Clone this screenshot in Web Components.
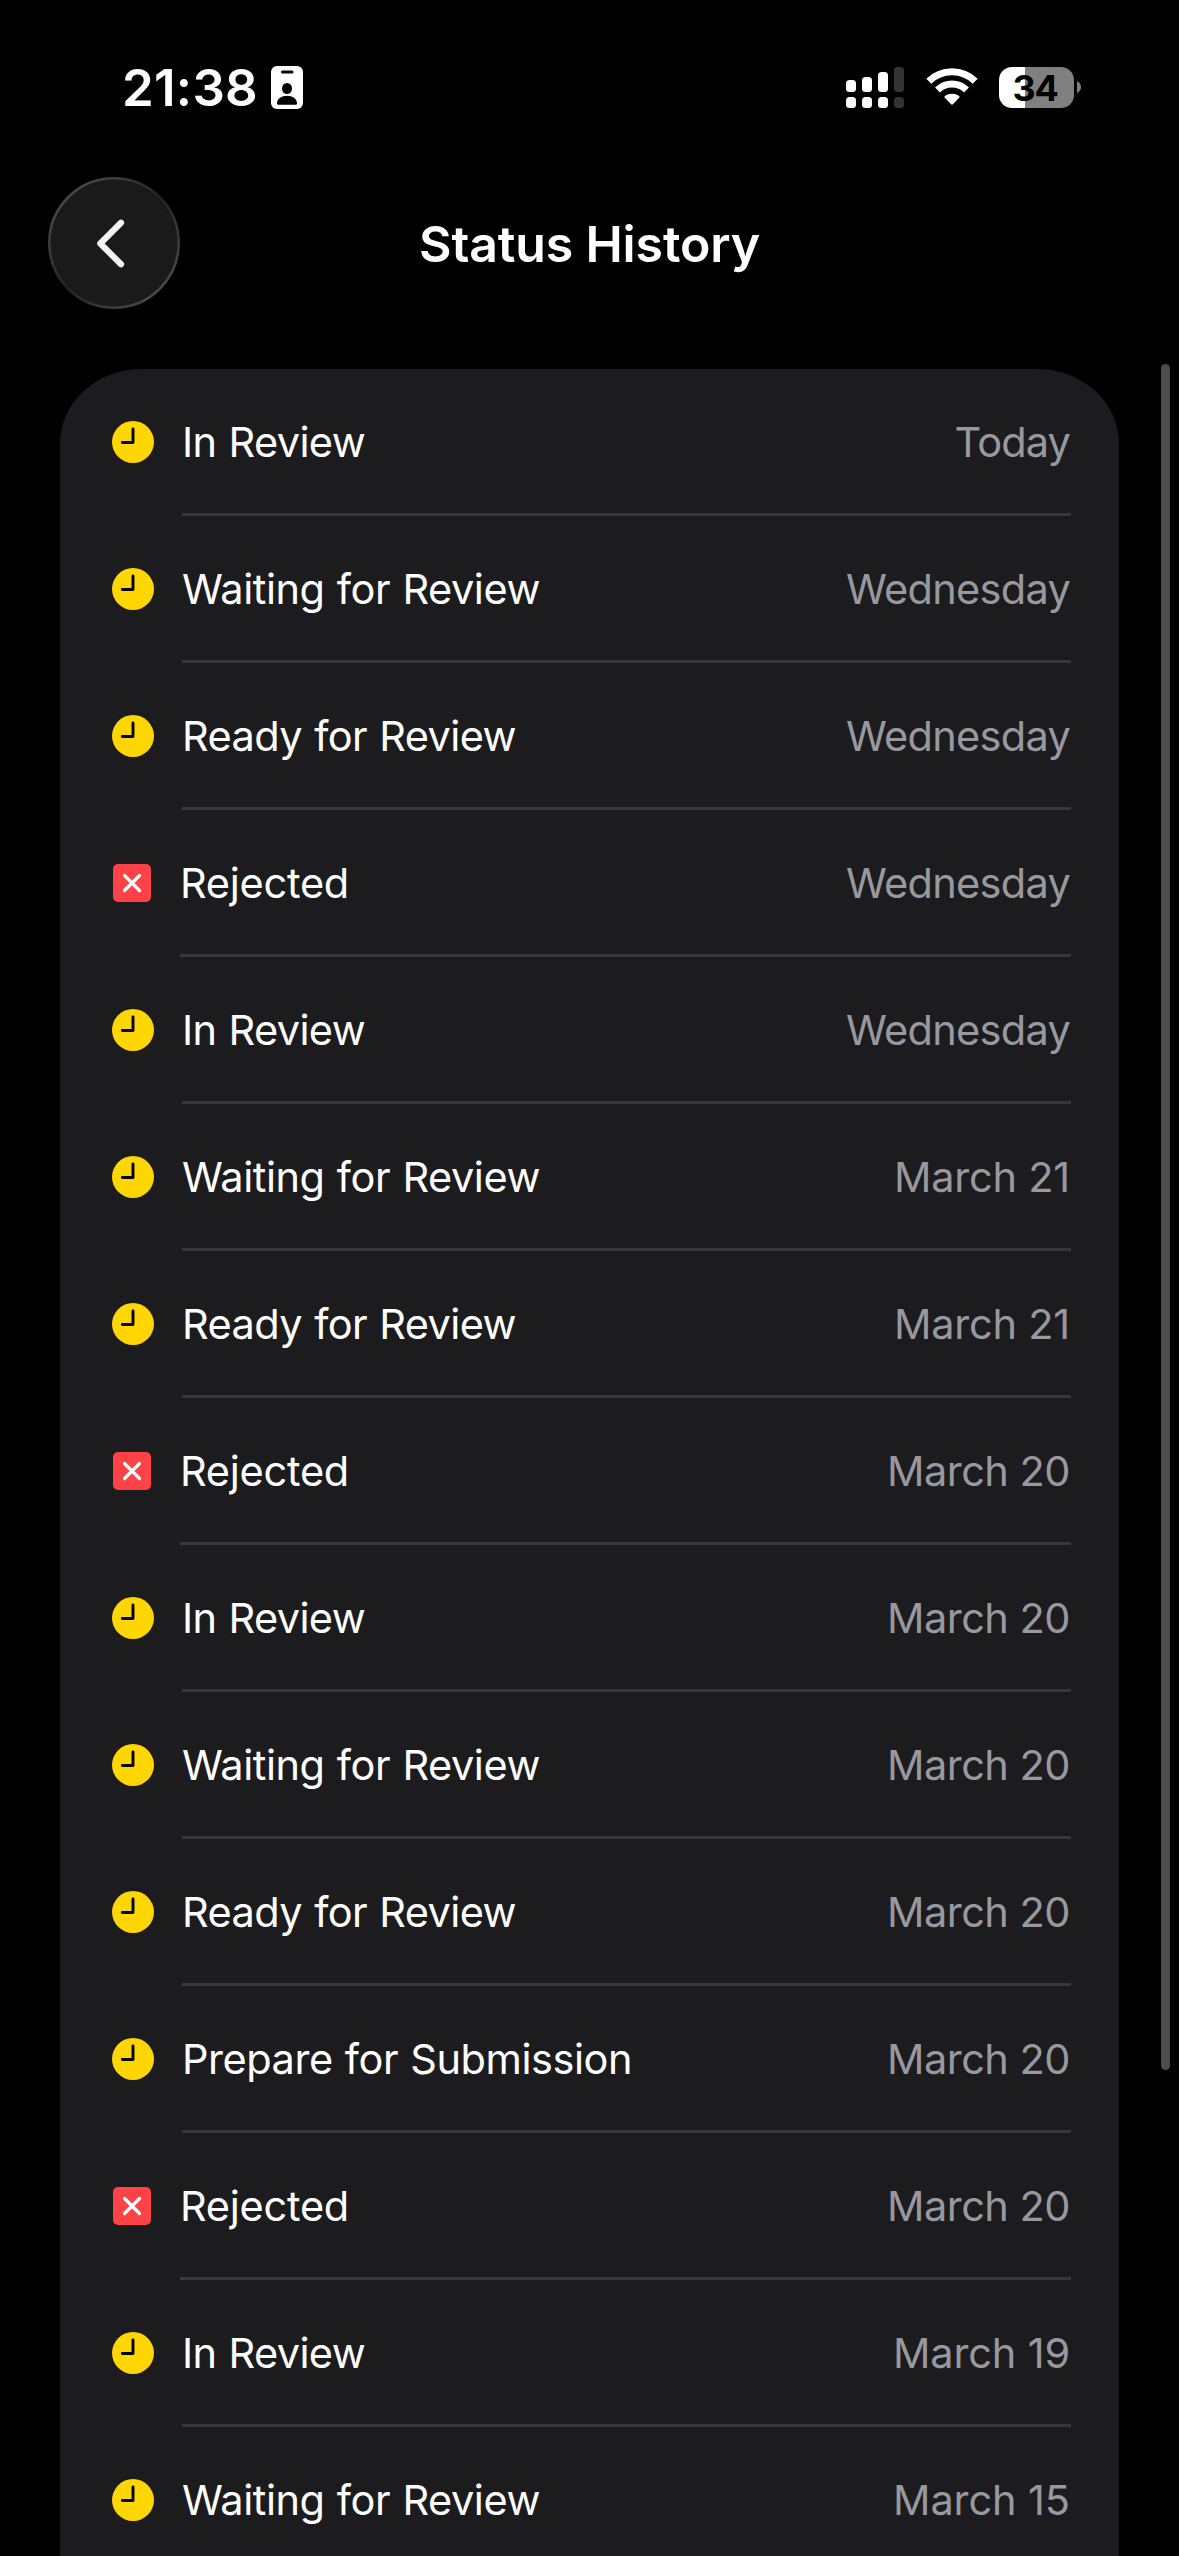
<!DOCTYPE html>
<html lang="en">
<head>
<meta charset="utf-8">
<title>Status History</title>
<style>
html, body { margin: 0; background: #000; }
body { width: 1179px; height: 2556px; overflow: hidden; font-family: Inter, "Liberation Sans", sans-serif; color: #fff; }
</style>
</head>
<body>
<history-screen></history-screen>
<script>
const define = (name, html, setup) => {
  const tpl = document.createElement('template');
  tpl.innerHTML = html;
  customElements.define(name, class extends HTMLElement {
    connectedCallback() {
      if (this.shadowRoot) return;
      this.attachShadow({ mode: 'open' }).appendChild(tpl.content.cloneNode(true));
      if (setup) setup(this, this.shadowRoot);
    }
  });
};

/* One line of text tracked to an exact advance width. */
define('fit-text', `<style>
:host { display: block; white-space: pre; flex: none; }
span { display: inline-block; }
</style><span></span>`, (el, root) => {
  const span = root.querySelector('span');
  const text = el.getAttribute('text');
  span.textContent = text;
  const target = parseFloat(el.getAttribute('width'));
  const natural = span.getBoundingClientRect().width;
  span.style.letterSpacing = ((target - natural) / text.length) + 'px';
});

define('status-bar', `<style>
:host { display: flex; height: 177px; box-sizing: border-box; padding: 66px 98px 0 122px; align-items: flex-start; justify-content: space-between; }
.left, .right { display: flex; align-items: flex-start; }
.time { font-size: 51px; font-weight: 600; line-height: 43px; }
svg { display: block; flex: none; }
.id { margin-left: 13px; }
.signal { margin-top: 1px; }
.wifi { margin: 2px 0 0 22px; }
.cap { display: flex; box-sizing: border-box; padding-right: 3px; margin: 1px 0 0 21px; width: 75px; height: 41px; border-radius: 13px; justify-content: center; align-items: center;
  background: linear-gradient(90deg, #fff 26px, #808080 26px); color: #000; font-size: 36px; font-weight: 700; }
.nub { margin: 15px 0 0 3px; }
</style>
<div class="left"><fit-text class="time" text="21:38" width="136"></fit-text>
<svg class="id" width="32" height="43" viewBox="0 0 32 43"><rect width="32" height="43" rx="6" fill="#fff"/><rect x="10" y="4.6" width="12.5" height="3" rx="1.5"/><ellipse cx="16" cy="22.5" rx="5" ry="5.6"/><path d="M6 37.5C6 32.500 10.500 29.700 16 29.700S26 32.500 26 37.500Q26 38.700 24.800 38.700H7.200Q6 38.700 6 37.500Z"/></svg></div>
<div class="right">
<svg class="signal" width="58" height="41" viewBox="0 0 58 41" fill="#fff"><rect y="13" width="10" height="12" rx="3.500"/><rect x="16" y="10" width="10" height="15" rx="3.500"/><rect x="32" y="5" width="10" height="20" rx="3.500"/><rect y="30" width="10" height="11" rx="3.500"/><rect x="16" y="30" width="10" height="11" rx="3.500"/><rect x="32" y="30" width="10" height="11" rx="3.500"/><g fill="#333"><rect x="48" width="10" height="25" rx="3.500"/><rect x="48" y="30" width="10" height="11" rx="3.500"/></g></svg>
<svg class="wifi" width="52" height="38" viewBox="0 0 52 38"><g fill="none" stroke="#fff" stroke-width="7"><path d="M2.800 13.300A33 33 0 0 1 49.200 13.300"/><path d="M11.500 22A20.600 20.600 0 0 1 40.500 22"/></g><path d="M18.800 29.800Q17.800 28.900 18.900 28C23 24.900 29 24.900 33.100 28Q34.200 28.900 33.200 29.800L26.900 36.300Q26 37.100 25.100 36.300Z" fill="#fff"/></svg>
<div class="cap"><fit-text text="34" width="45"></fit-text></div>
<svg class="nub" width="4" height="12" viewBox="0 0 4 12"><path d="M0 0Q4 2 4 6T0 12Z" fill="#808080"/></svg>
</div>`);

define('back-button', `<style>
:host { display: flex; width: 132px; height: 132px; flex: none; }
svg { display: block; }
</style>
<svg width="132" height="132" viewBox="0 0 132 132"><defs><linearGradient id="rim" x1="0.1" y1="0.1" x2="0.9" y2="0.9"><stop offset="0" stop-color="#4c4c4c"/><stop offset=".5" stop-color="#232323"/><stop offset="1" stop-color="#4c4c4c"/></linearGradient></defs><circle cx="66" cy="66" r="64.700" fill="#1a1a1a" stroke="url(#rim)" stroke-width="2.500"/><path d="M73 45.700L52.300 66.500L73 87.300" fill="none" stroke="#f2f2f2" stroke-width="6.200" stroke-linecap="round" stroke-linejoin="round"/></svg>`);

define('nav-bar', `<style>
:host { display: grid; grid-template-columns: 132px 1fr 132px; padding: 0 48px; height: 192px; align-items: start; }
.title { justify-self: center; font-size: 50px; font-weight: 600; line-height: 132px; padding-top: 1px; }
</style><back-button></back-button><fit-text class="title" text="Status History" width="341"></fit-text>`);

define('clock-icon', `<style>:host { display: block; width: 42px; height: 42px; } svg { display: block; }</style>
<svg width="42" height="42" viewBox="0 0 42 42"><circle cx="21" cy="21" r="21" fill="#ffd600"/><path d="M21 8V21.500H10.300" fill="none" stroke="#000" stroke-width="2.900" stroke-linecap="round" stroke-linejoin="round"/></svg>`);

define('reject-icon', `<style>:host { display: block; width: 38px; height: 38px; } svg { display: block; }</style>
<svg width="38" height="38" viewBox="0 0 38 38"><rect width="38" height="38" rx="5" fill="#ff4245"/><path d="M11.500 11.500L26.500 26.500M26.500 11.500L11.500 26.500" stroke="#fff" stroke-width="3.200" stroke-linecap="round"/></svg>`);

define('history-row', `<style>
:host { display: flex; height: 147px; flex: none; padding: 0 48px 0 52px; font-size: 41.500px; line-height: 50px; }
.icon { display: flex; width: 70px; align-items: center; padding-bottom: 1px; }
:host([rejected]) .icon { width: 67px; padding-left: 1px; }
.body { display: flex; flex: 1; justify-content: space-between; align-items: center; border-bottom: 3px solid #38383a; padding: 2px 1px 0 0; }
.label { word-spacing: 1px; }
.date { color: #98989f; }
</style><div class="icon"></div><div class="body"></div>`, (el, root) => {
  const [label, lw, date, dw] = el.data;
  root.querySelector('.icon').innerHTML = el.hasAttribute('rejected') ? '<reject-icon></reject-icon>' : '<clock-icon></clock-icon>';
  root.querySelector('.body').innerHTML = `<fit-text class="label" text="${label}" width="${lw}"></fit-text><fit-text class="date" text="${date}" width="${dw}"></fit-text>`;
});

define('history-list', `<style>
:host { display: flex; flex-direction: column; width: 1059px; height: 2187px; overflow: hidden; background: #1c1c1e; border-radius: 81px 81px 0 0 / 75px 75px 0 0; }
</style>`, (el, root) => {
  const labels = { I: ['In Review', 183], W: ['Waiting for Review', 358], R: ['Ready for Review', 334], X: ['Rejected', 169], P: ['Prepare for Submission', 450] };
  const dates = { t: ['Today', 115.5], w: ['Wednesday', 224], a: ['March 21', 176], b: ['March 20', 183], c: ['March 19', 177], d: ['March 15', 177] };
  for (const key of 'It Ww Rw Xw Iw Wa Ra Xb Ib Wb Rb Pb Xb Ic Wd'.split(' ')) {
    const row = document.createElement('history-row');
    if (key[0] === 'X') row.setAttribute('rejected', '');
    row.data = [...labels[key[0]], ...dates[key[1]]];
    root.appendChild(row);
  }
});

define('scroll-indicator', `<style>:host { display: block; width: 9px; height: 1706px; margin-top: -5px; border-radius: 5px; background: #4d4d4d; }</style>`);

define('history-screen', `<style>
:host { display: flex; flex-direction: column; width: 1179px; height: 2556px; overflow: hidden; background: #000; }
main { display: flex; align-items: flex-start; justify-content: space-between; padding: 0 9px 0 60px; }
</style><status-bar></status-bar><nav-bar></nav-bar><main><history-list></history-list><scroll-indicator></scroll-indicator></main>`);
</script>
</body>
</html>
